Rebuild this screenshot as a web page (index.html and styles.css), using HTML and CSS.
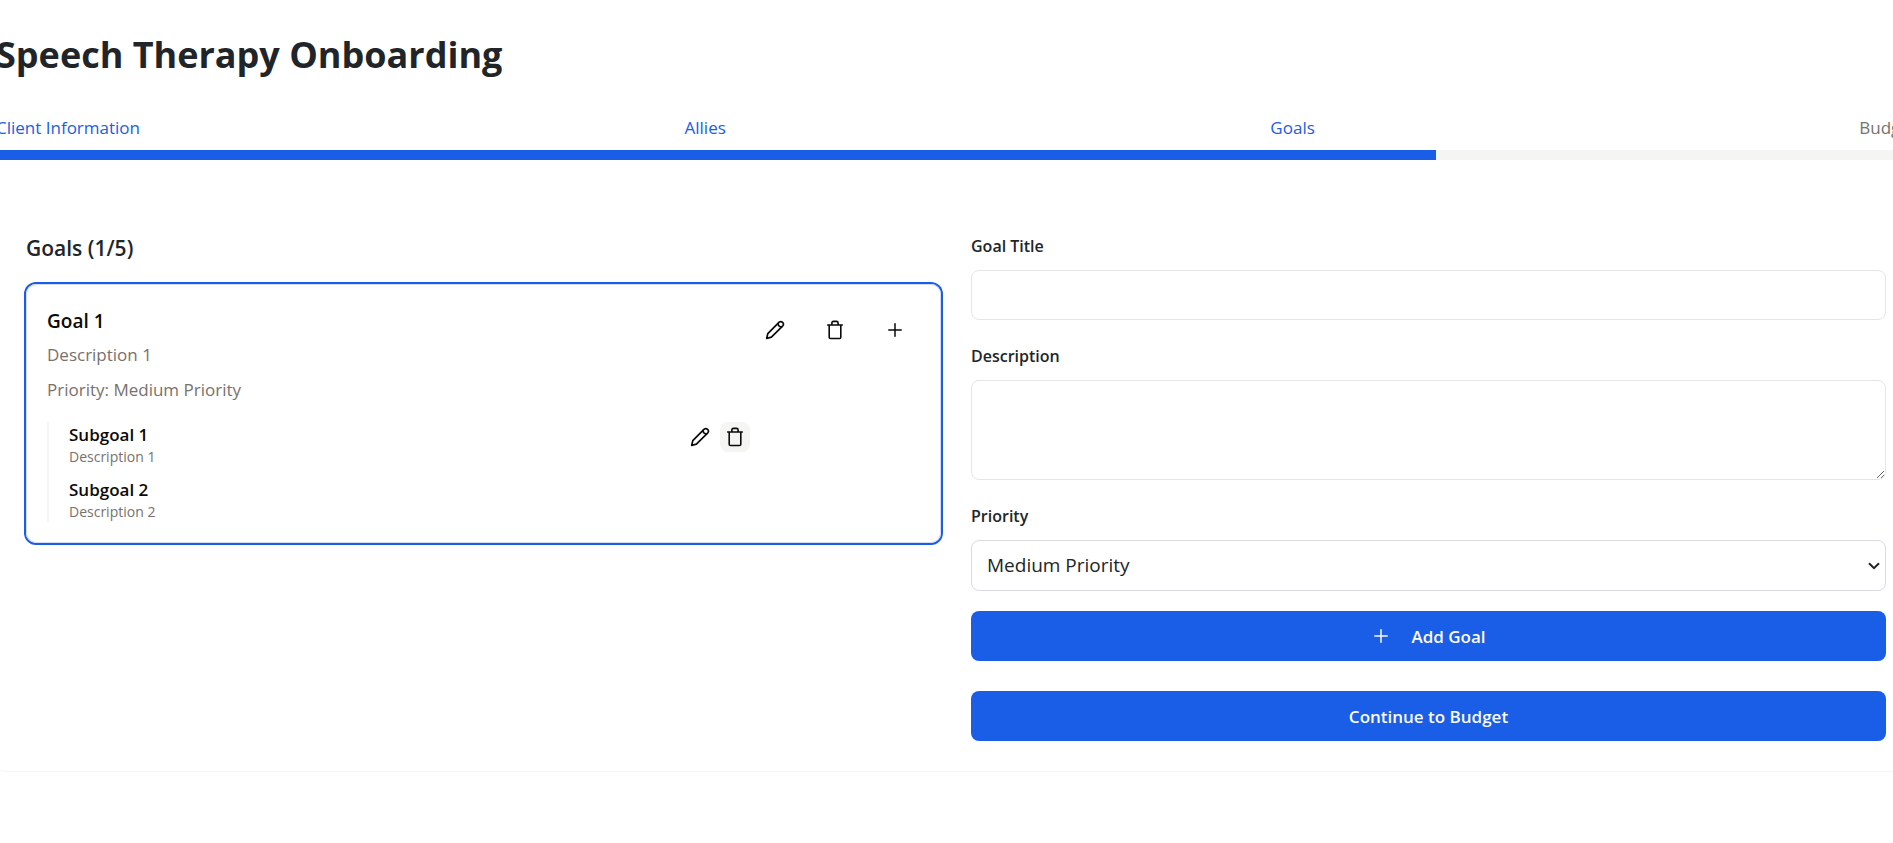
FILE: index.html
```html
<!DOCTYPE html>
<html lang="en">
<head>
<meta charset="utf-8">
<title>Speech Therapy Onboarding</title>
<link rel="stylesheet" href="styles.css">
</head>
<body>
<svg class="sprite" aria-hidden="true">
  <symbol id="edit" viewBox="0 0 20 20"><g fill="none" stroke="currentColor" stroke-width="1.7" stroke-linejoin="round" stroke-linecap="round"><path d="M1.7 18.3 2.8 13.6 14.2 2.2Q16 .8 17.6 2.4 19.2 4 17.8 5.8L6.4 17.2Z"/><path d="M12.9 3.5Q13.2 6.6 16.5 7.1"/></g></symbol>
  <symbol id="bin" viewBox="0 0 20 20"><g fill="none" stroke="currentColor" stroke-width="1.6" stroke-linejoin="round" stroke-linecap="round"><path d="M2.7 5H17.3M4.2 5V17.2Q4.2 18.5 5.5 18.5H14.5Q15.8 18.5 15.8 17.2V5M6.9 4.8V3Q6.9 1.4 8.5 1.4H11.5Q13.1 1.4 13.1 3V4.8"/></g></symbol>
  <symbol id="plus" viewBox="0 0 20 20"><path fill="none" stroke="currentColor" stroke-width="1.5" stroke-linecap="round" d="M10 3.8V16.2M3.8 10H16.2"/></symbol>
</svg>
<div class="page">
  <h1 class="page-title">Speech Therapy Onboarding</h1>
  <nav class="steps" aria-label="Progress">
    <span class="step done">Client Information</span>
    <span class="step done">Allies</span>
    <span class="step done">Goals</span>
    <span class="step">Budget</span>
  </nav>
  <div class="progress"><div class="progress-fill" style="width:75%"></div></div>
  <main class="panel">
    <section class="goals">
      <h2 class="goals-title">Goals (1/5)</h2>
      <article class="goal">
        <div class="goal-main">
          <h3 class="goal-name">Goal 1</h3>
          <p class="goal-text">Description 1</p>
          <p class="goal-text priority">Priority: Medium Priority</p>
          <ul class="subgoals">
            <li class="subgoal">
              <div>
                <h4 class="subgoal-name">Subgoal 1</h4>
                <p class="subgoal-text">Description 1</p>
              </div>
              <div class="subgoal-actions">
                <button class="icon-button small" type="button" aria-label="Edit subgoal"><svg class="icon"><use href="#edit"/></svg></button>
                <button class="icon-button small hovered" type="button" aria-label="Delete subgoal"><svg class="icon"><use href="#bin"/></svg></button>
              </div>
            </li>
            <li class="subgoal">
              <div>
                <h4 class="subgoal-name">Subgoal 2</h4>
                <p class="subgoal-text">Description 2</p>
              </div>
            </li>
          </ul>
        </div>
        <div class="goal-actions">
          <button class="icon-button" type="button" aria-label="Edit goal"><svg class="icon"><use href="#edit"/></svg></button>
          <button class="icon-button" type="button" aria-label="Delete goal"><svg class="icon"><use href="#bin"/></svg></button>
          <button class="icon-button" type="button" aria-label="Add subgoal"><svg class="icon"><use href="#plus"/></svg></button>
        </div>
      </article>
    </section>
    <form class="form">
      <label class="label" for="title">Goal Title</label>
      <input class="control" id="title" type="text">
      <label class="label" for="description">Description</label>
      <textarea class="control area" id="description"></textarea>
      <label class="label" for="priority">Priority</label>
      <div class="select-wrap">
        <select class="control select" id="priority"><option>Medium Priority</option></select>
        <svg class="chevron" viewBox="0 0 12 8" aria-hidden="true"><path fill="none" stroke="currentColor" stroke-width="2" d="M1 1.2 6 6.2 11 1.2"/></svg>
      </div>
      <button class="button add" type="button"><svg class="icon"><use href="#plus"/></svg>Add Goal</button>
      <button class="button next" type="button">Continue to Budget</button>
    </form>
  </main>
</div>
</body>
</html>
```
FILE: styles.css
```css
* { box-sizing: border-box; }
h1, h2, h3, h4, p, ul { margin: 0; padding: 0; }
body {
  margin: 0;
  overflow-x: hidden;
  background: #fff;
  color: #212529;
  font-family: "Open Sans", "Noto Sans", sans-serif;
  font-size: 17px;
  line-height: 25px;
}
.sprite { display: none; }
.icon { width: 20px; height: 20px; flex: none; }
/* The page runs slightly past both window edges. */
.page { margin: 0 -23px 0 -4px; padding-top: 30px; }
.page-title { font-size: 36px; line-height: 50px; font-weight: 700; }
.steps { display: flex; justify-content: space-between; margin: 35px 0 10px; color: #78716c; }
.step.done { color: #1a5de6; }
.progress { height: 10px; background: #f5f5f4; }
.progress-fill { height: 100%; background: #1a5de6; }
.panel {
  display: grid;
  grid-template-columns: 1fr 1fr;
  gap: 30px;
  padding: 74px 30px 30px;
  border-bottom: 1px solid #f5f5f4;
  border-radius: 10px;
}
.goals-title { font-size: 21px; line-height: 28px; font-weight: 600; margin-bottom: 22px; }
.goal {
  display: flex;
  padding: 21px;
  border-radius: 10px;
  box-shadow: 0 0 0 2px #1a5de6, inset 0 0 0 1px #d3dcf2;
  color: #0c0a09;
}
.goal-main { flex: 1; }
.goal-name { font-size: 19px; line-height: 32px; font-weight: 600; }
.goal-text { margin-top: 5px; color: #78716c; }
.goal-text.priority { margin-top: 10px; }
.subgoals {
  display: flex;
  flex-direction: column;
  gap: 10px;
  margin-top: 20px;
  padding-left: 20px;
  border-left: 2px solid #f5f5f4;
  list-style: none;
}
.subgoal { display: flex; justify-content: space-between; }
.subgoal-name { font-size: 17px; line-height: 25px; font-weight: 600; }
.subgoal-text { font-size: 14px; line-height: 20px; color: #78716c; }
.subgoal-actions { display: flex; gap: 5px; }
.goal-actions { display: flex; gap: 10px; }
.icon-button {
  display: flex;
  align-items: center;
  justify-content: center;
  width: 50px;
  height: 50px;
  padding: 0;
  border: 0;
  border-radius: 8px;
  background: none;
  color: inherit;
}
.icon-button.small { width: 30px; height: 30px; }
.icon-button.hovered { background: #f5f5f4; }
.form { display: flex; flex-direction: column; }
.label { font-weight: 600; font-size: 16px; margin-bottom: 11px; }
.control {
  width: 100%;
  height: 50px;
  margin: 0 0 24px;
  padding: 10px 15px;
  border: 1px solid #e7e5e4;
  border-radius: 8px;
  background: #fff;
  color: #212529;
  font: inherit;
}
.area { height: 100px; resize: vertical; }
.select-wrap { position: relative; margin-bottom: 20px; }
.select { display: block; height: 51px; margin: 0; border-color: #d9dbe0; font-size: 19px; appearance: none; }
.chevron { position: absolute; right: 6px; top: 22px; width: 12px; height: 8px; pointer-events: none; }
.button {
  display: flex;
  align-items: center;
  justify-content: center;
  gap: 20px;
  height: 50px;
  border: 0;
  border-radius: 8px;
  background: #1a5de6;
  color: #fafaf9;
  font: inherit;
  font-weight: 600;
}
.next { margin-top: 30px; }
```
